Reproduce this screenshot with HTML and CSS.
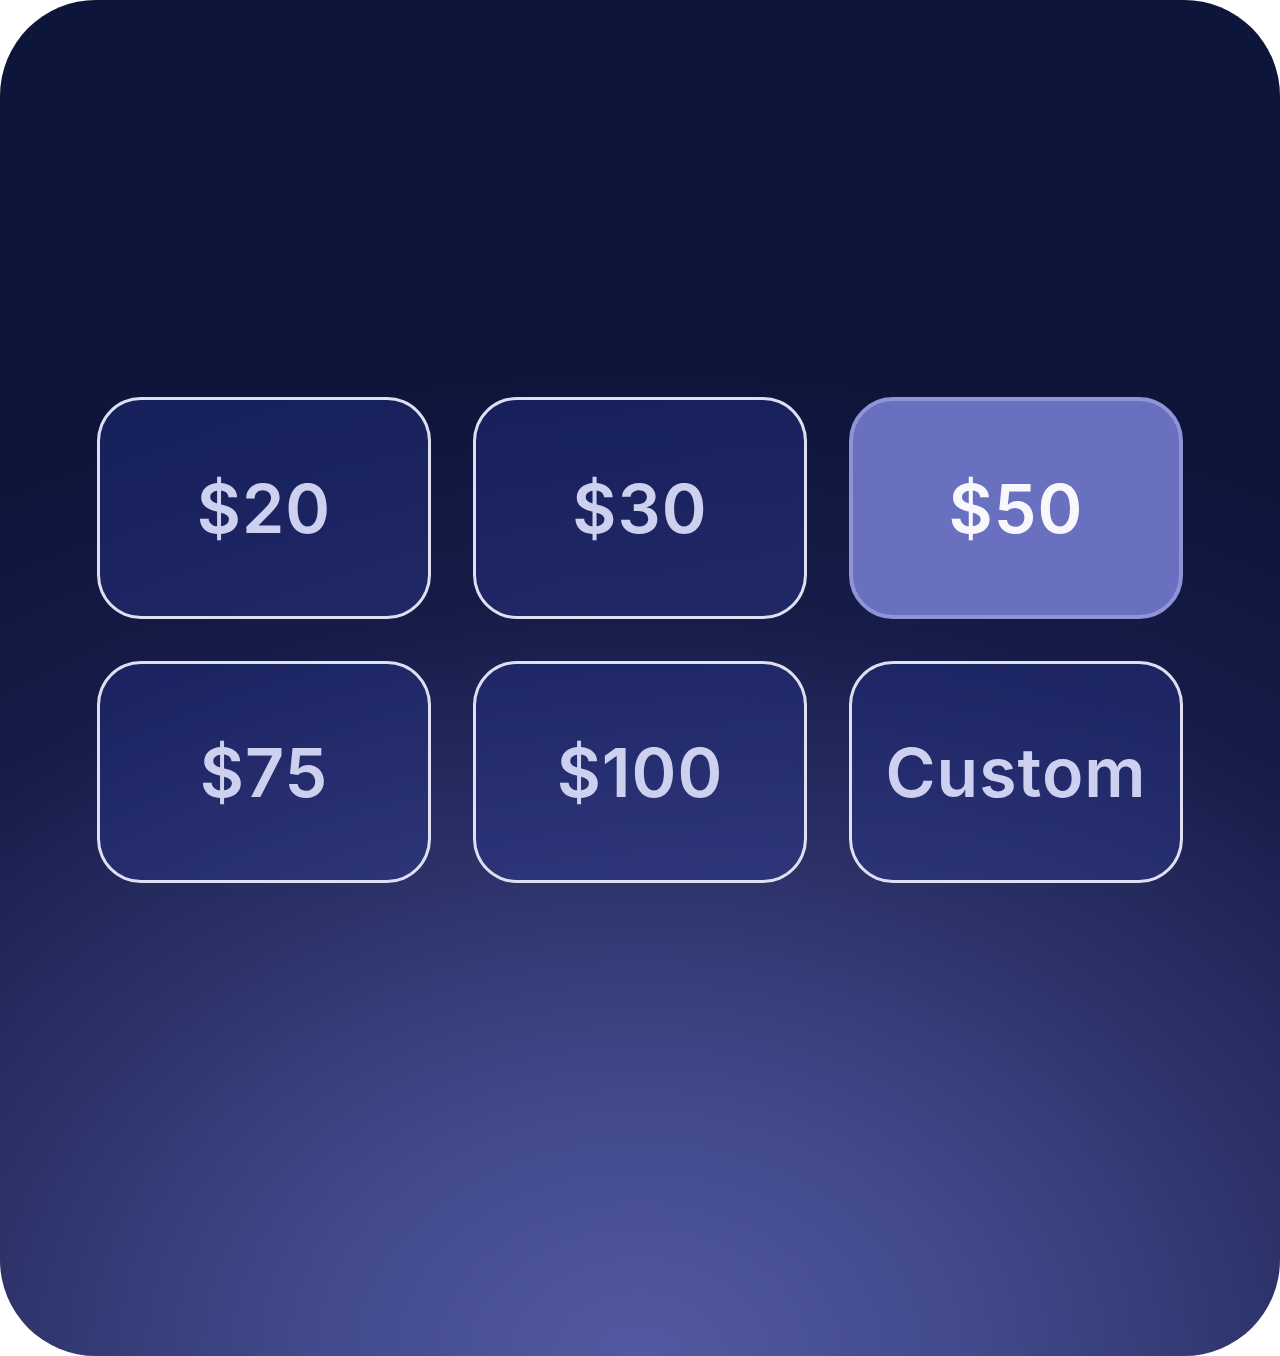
FILE: index.html
```html
<!DOCTYPE html>
<html lang="en">
<head>
<meta charset="utf-8">
<title>Amounts</title>
<link rel="stylesheet" href="styles.css">
</head>
<body>
<div class="card">
  <div class="grid">
    <button class="amount">$20</button>
    <button class="amount">$30</button>
    <button class="amount selected">$50</button>
    <button class="amount">$75</button>
    <button class="amount">$100</button>
    <button class="amount">Custom</button>
  </div>
</div>
</body>
</html>
```
FILE: styles.css
```css
html, body {
  margin: 0;
  padding: 0;
  background: #ffffff;
}
.card {
  width: 1280px;
  height: 1356px;
  border-radius: 96px;
  overflow: hidden;
  box-sizing: border-box;
  padding: 397px 97px 0 97px;
  background:
    radial-gradient(115% 82% at 50% 100%, #5259a2 0%, #424a8d 22%, #2c3268 45%, #161c48 68%, #0d153b 88%);
  background-color: #0d153b;
}
.grid {
  display: grid;
  grid-template-columns: repeat(3, 1fr);
  column-gap: 42px;
  row-gap: 42px;
}
.amount {
  height: 222px;
  box-sizing: border-box;
  border: 3px solid rgba(234, 234, 250, 0.95);
  border-radius: 44px;
  background: linear-gradient(160deg, rgba(36, 48, 135, 0.42) 0%, rgba(48, 58, 145, 0.42) 100%);
  color: #cdd0ee;
  font-family: "Inter", "Open Sans", sans-serif;
  font-weight: 600;
  font-size: 68px;
  letter-spacing: 1px;
  display: flex;
  align-items: center;
  justify-content: center;
  padding: 0;
  cursor: pointer;
}
.amount.selected {
  background: #6a70c0;
  border: 4px solid #8f94d6;
  color: #f7f7fc;
}
```
